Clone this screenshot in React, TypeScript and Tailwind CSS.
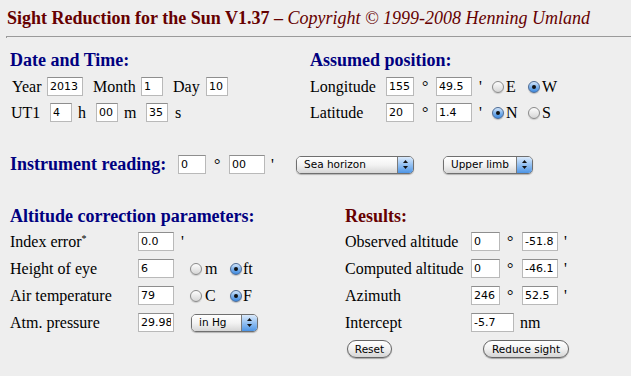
import React from "react";

function Field({ w, v }: { w: string; v: string }) {
  return (
    <input
      readOnly
      value={v}
      className={`${w} h-[19px] shrink-0 border border-[#b9b9b9] border-t-[#8e8e8e] bg-white px-[2px] font-['DejaVu_Sans',sans-serif] text-[11px] leading-[17px] text-black outline-none`}
    />
  );
}

function Radio({ on }: { on?: boolean }) {
  if (on) {
    return (
      <span className="inline-flex h-[12px] w-[12px] shrink-0 items-center justify-center rounded-full border border-[#4d6b95] bg-gradient-to-b from-[#d3e6fb] via-[#7fb3ec] to-[#3d8ae0] shadow-[0_1px_1px_rgba(0,0,0,0.2)]">
        <span className="h-[4px] w-[4px] rounded-full bg-[#111]" />
      </span>
    );
  }
  return (
    <span className="inline-block h-[12px] w-[12px] shrink-0 rounded-full border border-[#8a8a8a] bg-gradient-to-b from-[#fdfdfd] to-[#d6d6d6] shadow-[0_1px_1px_rgba(0,0,0,0.15)]" />
  );
}

function Arrows() {
  return (
    <svg width="7" height="11" viewBox="0 0 7 11">
      <path d="M3.5 1 L6 4 L1 4 Z" fill="#111" />
      <path d="M3.5 10 L6 7 L1 7 Z" fill="#111" />
    </svg>
  );
}

function Select({ w, label }: { w: string; label: string }) {
  return (
    <div
      className={`${w} flex h-[18px] shrink-0 overflow-hidden rounded-[5px] border border-[#6f6f6f] shadow-[0_1px_1px_rgba(0,0,0,0.25)]`}
    >
      <div className="flex flex-1 items-center bg-gradient-to-b from-white via-[#f3f3f3] to-[#d6d6d6] pl-[7px] font-['DejaVu_Sans',sans-serif] text-[10.5px] leading-none text-black">
        {label}
      </div>
      <div className="flex w-[16px] items-center justify-center border-l border-[#7a7a7a] bg-gradient-to-b from-[#dbeafb] via-[#93c0f1] to-[#4c95e6]">
        <Arrows />
      </div>
    </div>
  );
}

function Btn({ w, label }: { w: string; label: string }) {
  return (
    <button
      className={`${w} flex h-[18px] shrink-0 items-center justify-center rounded-full border border-[#666] bg-gradient-to-b from-white via-[#f1f1f1] to-[#d5d5d5] font-['DejaVu_Sans',sans-serif] text-[10.5px] leading-none text-black shadow-[0_1px_1px_rgba(0,0,0,0.3)]`}
    >
      {label}
    </button>
  );
}

export default function App() {
  return (
    <div className="h-[376px] w-[631px] overflow-hidden bg-[#eeeeee] font-['Liberation_Serif',serif] text-[16px] text-black">
      <div className="h-[36px] whitespace-nowrap pl-[7px] pt-[8px] text-[18px] leading-[20px] text-[#660000]">
        <b>Sight Reduction for the Sun V1.37 –</b> <i>Copyright © 1999-2008 Henning Umland</i>
      </div>
      <div className="ml-[6px] h-[2px] border-l border-t border-[#9a9a9a]" />

      {/* Date/time + assumed position */}
      <div className="mt-[12px] flex">
        <div className="w-[300px] pl-[10px]">
          <h2 className="text-[18px] font-bold leading-[20px] text-[#000080]">Date and Time:</h2>
          <div className="mt-[7px] flex h-[19px] items-center leading-[19px]">
            <span className="w-[37px] pl-[2px]">Year</span>
            <Field w="w-[36px]" v="2013" />
            <span className="w-[58px] pl-[10px]">Month</span>
            <Field w="w-[22px]" v="1" />
            <span className="w-[43px] pl-[10px]">Day</span>
            <Field w="w-[22px]" v="10" />
          </div>
          <div className="mt-[7px] flex h-[19px] items-center leading-[19px]">
            <span className="w-[40px] pl-[1px]">UT1</span>
            <Field w="w-[22px]" v="4" />
            <span className="w-[24px] pl-[6px]">h</span>
            <Field w="w-[22px]" v="00" />
            <span className="w-[28px] pl-[6px]">m</span>
            <Field w="w-[22px]" v="35" />
            <span className="pl-[7px]">s</span>
          </div>
        </div>
        <div className="pl-[10px]">
          <h2 className="text-[18px] font-bold leading-[20px] text-[#000080]">Assumed position:</h2>
          <div className="mt-[7px] flex h-[19px] items-center leading-[19px]">
            <span className="w-[76px]">Longitude</span>
            <Field w="w-[28px]" v="155" />
            <span className="w-[22px] pl-[8px]">°</span>
            <Field w="w-[36px]" v="49.5" />
            <span className="w-[20px] pl-[7px]">'</span>
            <Radio />
            <span className="w-[24px] pl-[2px]">E</span>
            <Radio on />
            <span className="pl-[2px]">W</span>
          </div>
          <div className="mt-[7px] flex h-[19px] items-center leading-[19px]">
            <span className="w-[76px]">Latitude</span>
            <Field w="w-[28px]" v="20" />
            <span className="w-[22px] pl-[8px]">°</span>
            <Field w="w-[36px]" v="1.4" />
            <span className="w-[20px] pl-[7px]">'</span>
            <Radio on />
            <span className="w-[24px] pl-[2px]">N</span>
            <Radio />
            <span className="pl-[2px]">S</span>
          </div>
        </div>
      </div>

      {/* Instrument reading */}
      <div className="mt-[33px] flex h-[19px] items-center pl-[10px] leading-[19px]">
        <span className="w-[168px] text-[18px] font-bold text-[#000080]">Instrument reading:</span>
        <Field w="w-[28px]" v="0" />
        <span className="w-[23px] pl-[8px]">°</span>
        <Field w="w-[36px]" v="00" />
        <span className="w-[31px] pl-[6px]">'</span>
        <Select w="w-[118px]" label="Sea horizon" />
        <span className="w-[29px]" />
        <Select w="w-[90px]" label="Upper limb" />
      </div>

      {/* Corrections + results */}
      <div className="mt-[32px] flex">
        <div className="w-[335px] pl-[10px]">
          <h2 className="text-[18px] font-bold leading-[20px] text-[#000080]">Altitude correction parameters:</h2>
          <div className="mt-[6px] flex h-[19px] items-center leading-[19px]">
            <span className="w-[128px]">
              Index error<sup className="text-[10px]">*</sup>
            </span>
            <Field w="w-[36px]" v="0.0" />
            <span className="pl-[7px]">'</span>
          </div>
          <div className="mt-[8px] flex h-[19px] items-center leading-[19px]">
            <span className="w-[128px]">Height of eye</span>
            <Field w="w-[36px]" v="6" />
            <span className="w-[16px]" />
            <Radio />
            <span className="w-[28px] pl-[3px]">m</span>
            <Radio on />
            <span className="pl-[1px]">ft</span>
          </div>
          <div className="mt-[8px] flex h-[19px] items-center leading-[19px]">
            <span className="w-[128px]">Air temperature</span>
            <Field w="w-[36px]" v="79" />
            <span className="w-[16px]" />
            <Radio />
            <span className="w-[28px] pl-[3px]">C</span>
            <Radio on />
            <span className="pl-[1px]">F</span>
          </div>
          <div className="mt-[8px] flex h-[19px] items-center leading-[19px]">
            <span className="w-[128px]">Atm. pressure</span>
            <Field w="w-[36px]" v="29.98" />
            <span className="w-[17px]" />
            <Select w="w-[67px]" label="in Hg" />
          </div>
        </div>
        <div className="pl-[10px]">
          <h2 className="text-[18px] font-bold leading-[20px] text-[#660000]">Results:</h2>
          <div className="mt-[6px] flex h-[19px] items-center leading-[19px]">
            <span className="w-[126px]">Observed altitude</span>
            <Field w="w-[29px]" v="0" />
            <span className="w-[22px] pl-[7px]">°</span>
            <Field w="w-[36px]" v="-51.8" />
            <span className="pl-[6px]">'</span>
          </div>
          <div className="mt-[8px] flex h-[19px] items-center leading-[19px]">
            <span className="w-[126px]">Computed altitude</span>
            <Field w="w-[29px]" v="0" />
            <span className="w-[22px] pl-[7px]">°</span>
            <Field w="w-[36px]" v="-46.1" />
            <span className="pl-[6px]">'</span>
          </div>
          <div className="mt-[8px] flex h-[19px] items-center leading-[19px]">
            <span className="w-[126px]">Azimuth</span>
            <Field w="w-[29px]" v="246" />
            <span className="w-[22px] pl-[7px]">°</span>
            <Field w="w-[36px]" v="52.5" />
            <span className="pl-[6px]">'</span>
          </div>
          <div className="mt-[8px] flex h-[19px] items-center leading-[19px]">
            <span className="w-[126px]">Intercept</span>
            <Field w="w-[43px]" v="-5.7" />
            <span className="pl-[6px]">nm</span>
          </div>
          <div className="mt-[8px] flex h-[18px] items-center">
            <span className="w-[2px]" />
            <Btn w="w-[45px]" label="Reset" />
            <span className="w-[91px]" />
            <Btn w="w-[86px]" label="Reduce sight" />
          </div>
        </div>
      </div>
    </div>
  );
}
